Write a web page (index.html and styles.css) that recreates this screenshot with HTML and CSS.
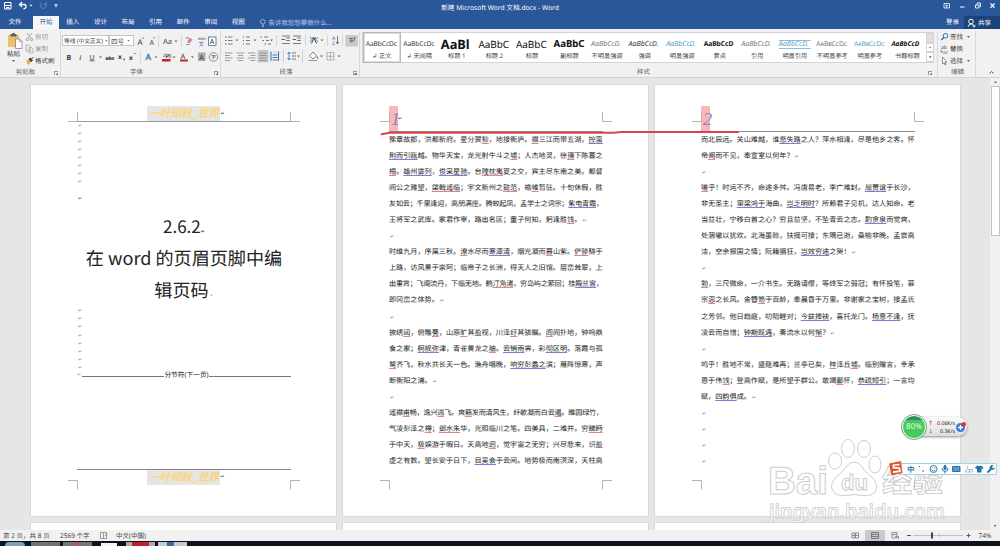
FILE: index.html
```html
<!DOCTYPE html>
<html lang="zh-CN">
<head>
    <meta charset="UTF-8">
    <meta name="viewport" content="width=device-width, initial-scale=1.0">
    <title>新建 Microsoft Word 文档.docx - Word</title>
    <link rel="stylesheet" href="styles.css">
</head>
<body>
    <div class="titlebar">
        <svg class="quick" width="64" height="16" viewBox="0 0 64 16" fill="none" stroke="#fff">
            <path d="M4.5 2.5h6.5v6.500h-6.500zM4.500 5.500h6.500M6.500 9v-1.500h2.500v1.500"/>
            <path d="M20 4.500h4q2.500 .3 2 2.500q-.5 1.500-2.500 2M22 2l-2.500 2.500l2.500 2.500" stroke-width="1.300"/>
            <path d="M29.500 4.700h3l-1.500 1.800z" fill="#fff" stroke="none"/>
            <path d="M45.500 3.500a3 3 0 1 1-3.500-.8M46 2v2.500h-2.500" stroke="#6488bd"/>
            <path d="M54.500 4h3v.7h-3zM54.500 5.500h3l-1.500 1.700z" fill="#fff" stroke="none"/>
        </svg>
        <p>新建 Microsoft Word 文档.docx - Word</p>
        <svg class="quick" width="64" height="16" viewBox="0 0 64 16" fill="none" stroke="#fff">
            <path d="M8 3.500h5.500v4.500h-5.500zM10.700 8v-3M9.500 6l1.200-1.200l1.200 1.200" stroke-width=".8"/>
            <path d="M24 7h4.500"/>
            <path d="M39.500 5h3.500v3h-3.500zM41 4.500v-1.500h3.500v3.500h-1.200" stroke-width=".9"/>
            <path d="M54.500 3.500l4 4.300M58.500 3.500l-4 4.300" stroke-width="1.200"/>
        </svg>
    </div>
    <div class="tabs">
        <span class="tab file">文件</span>
        <span class="tab active">开始</span>
        <span class="tab">插入</span>
        <span class="tab">设计</span>
        <span class="tab">布局</span>
        <span class="tab">引用</span>
        <span class="tab">邮件</span>
        <span class="tab">审阅</span>
        <span class="tab">视图</span>
        <span class="tell">
            <svg width="8" height="10" viewBox="0 0 8 10" fill="none" stroke="#b8cbe6" stroke-width=".8"><path d="M2.700 6q-1.500-1-1.200-2.800q.5-1.700 2.300-1.700t2.300 1.700q.2 1.800-1.200 2.800zM2.800 7.300h2M3 8.500h1.600"/></svg>
            告诉我您想要做什么...
        </span>
        <span class="login">登录</span>
        <span class="share">
            <svg width="9" height="10" viewBox="0 0 9 10" fill="none" stroke="#fff"><circle cx="4" cy="3.500" r="2.300"/><path d="M1 9q.5-3 3-3q1 0 2 1M5.500 8h3M7 6.500v3" stroke-width=".9"/></svg>
            共享
        </span>
    </div>

    <div class="ribbon">
        <div class="group clip">
            <div class="tools">
                <div class="paste">
                    <svg width="16" height="18" viewBox="0 0 16 18"><path d="M1 3h11v12h-11z" fill="#eec06c"/><path d="M3.500 2h1.500q1.500-2.500 3 0h1.500v2.500h-6z" fill="#5f5f5f"/><path d="M8.500 7h4l2.500 2.500v7h-6.500z" fill="#fff" stroke="#777" stroke-width=".7"/><path d="M12.500 7v2.500h2.500" fill="none" stroke="#777" stroke-width=".6"/></svg>
                    <span>粘贴</span>
                    <i class="arrow"></i>
                </div>
                <div class="list">
                    <div class="off"><svg width="10" height="10" viewBox="0 0 10 10" fill="none" stroke="#999" stroke-width=".9"><path d="M2 1l4 5.500M7 1l-4 5.500"/><circle cx="2.300" cy="7.500" r="1.200"/><circle cx="6.600" cy="7.500" r="1.200"/></svg>剪切</div>
                    <div class="off"><svg width="10" height="10" viewBox="0 0 10 10" fill="#f1f1f1" stroke="#aaa" stroke-width=".8"><path d="M1 1h3l1.500 1.500v4.500h-4.500zM4 3.500h2.500l1.500 1.500v4h-4z"/></svg>复制</div>
                    <div><svg width="10" height="10" viewBox="0 0 10 10"><path d="M1 5l3-2 2 2.500-2 3.500q-1 0-3-4z" fill="#eba94b"/><path d="M4 3l1.500-1 2 2.500-1.200 1.200zM6.500 3l2-2" fill="#444" stroke="#444"/></svg>格式刷</div>
                </div>
            </div>
            <div class="label">剪贴板<i class="launch"></i></div>
        </div>

        <div class="group font">
            <div class="row">
                <span class="combo name">等线 (中文正文)<i class="arrow"></i></span>
                <span class="combo size">四号<i class="arrow"></i></span>
                <svg width="83" height="12" viewBox="135 0 83 12">
                    <g fill="#444" class="glyph"><text x="137.500" y="9.500" font-size="8">A</text><text x="149.500" y="9.500" font-size="7">A</text><text x="163" y="9" font-size="7.500">Aa</text><text x="198" y="4.500" font-size="4">wén</text></g>
                    <path d="M142 3.500l1-1.500 1 1.500zM153 2.500h2l-1 1.300z" fill="#2a6fb5"/>
                    <path d="M158.500 0v12M181.500 0v12" stroke="#d5d5d5"/>
                    <path d="M174.500 5.500h3l-1.500 1.700z" fill="#666"/>
                    <path d="M187 7l3-4 2.500 1.500-3 4z" fill="#df7891"/><path d="M186 4l1.500-2 1.500 2M186.500 9.500h3" stroke="#555" stroke-width=".7" fill="none"/>
                    <text x="198.500" y="10.500" font-size="5.500" fill="#2a6fb5">文</text>
                    <rect x="208.500" y="2" width="7.500" height="8.500" fill="#fff" stroke="#426b99" stroke-width=".8"/><text x="209.700" y="9" font-size="7" fill="#333">A</text>
                </svg>
            </div>
            <svg class="second" width="157" height="12" viewBox="61 0 157 12">
                <g fill="#333" font-size="7"><text x="65.500" y="8.500" font-weight="bold">B</text><text x="78" y="8.500" font-style="italic" font-family="Liberation Serif">I</text><text x="88.500" y="8.500" text-decoration="underline">U</text><text x="104.500" y="8.500" font-size="5" font-weight="bold" text-decoration="line-through">abc</text><text x="117" y="8" font-weight="bold" font-size="6.500">x</text><text x="128" y="8.500" font-weight="bold" font-size="6.500">x</text><text x="162" y="6" font-size="5">aby</text><text x="179.500" y="8" font-size="7.500">A</text></g>
                <path d="M122 8h1.500v1.500M133 2.500h1.500" stroke="#2a6fb5" fill="none"/>
                <path d="M98 5.500h3l-1.500 1.700zM153.500 5.500h3l-1.500 1.700zM171.500 5.500h3l-1.500 1.700zM190 5.500h3l-1.500 1.700z" fill="#666"/>
                <path d="M139.500 0v12" stroke="#d5d5d5"/>
                <text x="144.500" y="9" font-size="8.500" fill="#fff" stroke="#568dc7" stroke-width=".7">A</text>
                <path d="M165 7l3.500-4" stroke="#444"/><path d="M161 8h8.500v2.500h-8.500zM179 8.500h8v2h-8z" fill="#d51e2d"/>
                <path d="M197 1.500h7.500v8.500h-7.500z" fill="#aaa"/><text x="198.300" y="8.500" font-size="7" fill="#333">A</text>
                <circle cx="212.500" cy="6" r="4.300" fill="none" stroke="#666" stroke-width=".7"/><text x="210" y="8" font-size="5" fill="#444">字</text>
            </svg>
            <div class="label">字体<i class="launch"></i></div>
        </div>

        <div class="group para">
            <svg width="136" height="14" viewBox="222 0 136 14">
                <path d="M345.500 1h12.500v11.500h-12.500z" fill="#c9c9c9"/>
                <path d="M228 3h4.500M228 6.500h4.500M228 10h4.500M246 3h4M246 6.500h4M246 10h4M264 3h4M266 6.500h3M268 10h3M286 4h4M286 6.500h4M282 9.500h8M282 2h8M297 4h4M297 6.500h4M293 9.500h8M293 2h8" stroke="#6d6d6d" stroke-width=".9"/>
                <path d="M225 3h1.500M225 6.500h1.500M225 10h1.500M243 3h1M243 6.500h1M243 10h1M260.500 3h1.500M262.500 6.500h1.500M264.500 10h1.500M281.500 5.500h3.500M292.500 5.500h3.500" stroke="#2a6fb5" stroke-width="1.200"/>
                <path d="M235.500 5.500h3l-1.500 1.700zM253.500 5.500h3l-1.500 1.700zM270 5.500h3l-1.500 1.700zM320.500 5.500h3l-1.500 1.700z" fill="#666"/>
                <path d="M276.500 1v11M305.500 1v11M327.500 1v11M342.500 1v11" stroke="#d5d5d5"/>
                <path d="M310 3l2 2.500-2 2.500M318 3l-2 2.500 2 2.500" stroke="#2a6fb5" fill="none" stroke-width=".8"/><path d="M311.500 9.500l2.500-5.500 2.500 5.500M312 4h4" stroke="#444" fill="none"/>
                <text x="332" y="6" font-size="5" fill="#2a6fb5">A</text><text x="332" y="11" font-size="5" fill="#77539a">Z</text><path d="M337.500 2v7.500M336 8l1.500 2 1.500-2" stroke="#555" fill="none" stroke-width=".8"/>
                <path d="M355 3l-1.500 4h-3.500M351.500 5.500l-1.500 1.500 1.500 1.500M349 4.500h4" stroke="#555" fill="none" stroke-width=".9"/>
            </svg>
            <svg class="second" width="136" height="13" viewBox="222 0 136 13">
                <path d="M257.500 0h11v12.500h-11z" fill="#c7c7c7"/>
                <path d="M225 3h7.500M225 5.500h5M225 8h7.500M225 10.500h5M236.500 3h7.500M238 5.500h5M236.500 8h7.500M238 10.500h5M248 3h7.500M250.500 5.500h5M248 8h7.500M250.500 10.500h5M259.500 3h7M259.500 5.500h7M259.500 8h7M259.500 10.500h7" stroke="#888" stroke-width=".8"/>
                <path d="M271 1.500v9.500M278.500 1.500v9.500" stroke="#2a6fb5"/><path d="M272.500 5h5M272.500 7.500h5M272.500 10h5" stroke="#4a79ad"/>
                <path d="M273 2h4M283.500 0v12M302.500 0v12" stroke="#ccc"/>
                <path d="M289 2v8M287.500 4l1.500-2 1.500 2M287.500 8l1.500 2 1.500-2" stroke="#2a6fb5" fill="none" stroke-width=".8"/><path d="M292 3h4M292 6h4M292 9h4" stroke="#777"/>
                <path d="M309.500 6l3.500-4 3.500 4-3.500 3zM317 6l1 3" fill="#fff" stroke="#666" stroke-width=".8"/><path d="M308 10.500h9" stroke="#999"/>
                <path d="M327 2.500h7v7.500h-7zM330.500 2.500v7.500M327 6.300h7" fill="none" stroke="#999" stroke-width=".7"/>
                <path d="M297 5.500h3l-1.500 1.700zM320 5.500h3l-1.500 1.700zM337.500 5.500h3l-1.500 1.700z" fill="#666"/>
            </svg>
            <div class="label">段落<i class="launch"></i></div>
        </div>

        <div class="group styles">
            <div class="gallery">
                <div class="style on"><b>AaBbCcDc</b><span>↲ 正文</span></div>
                <div class="style"><b>AaBbCcDc</b><span>↲ 无间隔</span></div>
                <div class="style h1"><b>AaBl</b><span>标题 1</span></div>
                <div class="style h2"><b>AaBbC</b><span>标题 2</span></div>
                <div class="style h2"><b>AaBbC</b><span>标题</span></div>
                <div class="style h2 bold"><b>AaBbC</b><span>副标题</span></div>
                <div class="style it gray"><b>AaBbCcD.</b><span>不明显强调</span></div>
                <div class="style it"><b>AaBbCcD.</b><span>强调</span></div>
                <div class="style it blue"><b>AaBbCcD.</b><span>明显强调</span></div>
                <div class="style bold"><b>AaBbCcD</b><span>要点</span></div>
                <div class="style it gray"><b>AaBbCcD.</b><span>引用</span></div>
                <div class="style it blue lined"><b>AaBbCcD.</b><span>明显引用</span></div>
                <div class="style gray caps"><b>AaBbCcDc</b><span>不明显参考</span></div>
                <div class="style blue caps"><b>AaBbCcDc</b><span>明显参考</span></div>
                <div class="style it bold"><b>AaBbCcD</b><span>书籍标题</span></div>
                <div class="more"><i class="dim"></i><i><em class="arrow"></em></i><i><em class="arrow"></em></i></div>
            </div>
            <div class="label">样式<i class="launch"></i></div>
        </div>

        <div class="group edit">
            <div class="list">
                <div><svg width="10" height="10" viewBox="0 0 10 10" fill="none" stroke="#2a6fb5"><circle cx="5.500" cy="3.800" r="2.300"/><path d="M3.800 5.500l-2.500 2.500" stroke-width="1.400"/></svg>查找<i class="arrow"></i></div>
                <div><svg width="10" height="10" viewBox="0 0 10 10"><text x="1" y="5" font-size="5" fill="#444">ab</text><text x="3" y="9.500" font-size="5" fill="#77539a">ac</text><path d="M1 6v2h2" fill="none" stroke="#2a6fb5" stroke-width=".8"/></svg>替换</div>
                <div><svg width="10" height="10" viewBox="0 0 10 10"><path d="M2.500 1v7l1.500-1.500 1 2.500 1-.5-1-2.500h2z" fill="#fff" stroke="#666" stroke-width=".7"/></svg>选择<i class="arrow"></i></div>
            </div>
            <div class="label">编辑</div>
        </div>
        <svg class="fold" width="8" height="6" viewBox="0 0 8 6" fill="none" stroke="#555"><path d="M1.500 4.500l2-2 2 2"/></svg>
    </div>

    <div class="desk">
        <div class="pages">
            <div class="page cover">
                <svg class="marks" width="305" height="431" viewBox="0 0 305 431"><path d="M37 36.500h9M46.500 27v10M269 36.500h-9M259.500 27v10M37 395.500h9.500v9M269 395.500h-9.500v9"/></svg>
                <div class="head"><span class="art">一叶知秋_世界</span>↵</div>
                <div class="returns">↵<br>↵<br>↵<br>↵<br>↵<br>↵<br>↵<br>↵</div>
                <div class="returns dark">↵</div>
                <h1><span>2.6.2</span><small>↵</small><br>在 word 的页眉页脚中编<br>辑页码<small>·</small></h1>
                <div class="returns">↵<br>↵<br>↵<br>↵<br>↵<br>↵<br>↵<br>↵</div>
                <div class="break"><small>↵</small><i></i>分节符(下一页)<i></i></div>
                <div class="foot"><span class="art">一叶知秋_世界</span>↵</div>
            </div>

            <div class="page">
                <svg class="marks" width="305" height="431" viewBox="0 0 305 431"><path d="M37 36.500h9M46.500 27v10M269 36.500h-9.500v-9.500M37 395.500h9.500v9M269 395.500h-9.500v9"/></svg>
                <div class="num"><span>1</span>↵</div>
                <div class="text">
                    <p>豫章故郡，洪都新府。星分翼<u>轸</u>，地接衡庐。<u>襟</u>三江而带五湖，<u class="g">控蛮</u></p>
                    <p><u class="g">荆而引瓯</u>越。物华天宝，龙光射牛斗之<u>墟</u>；人杰地灵，徐<u>孺</u>下陈蕃之</p>
                    <p><u>榻</u>。<u class="g">雄州雾列</u>，<u class="g">俊采星驰</u>。台<u>隍枕夷</u>夏之交，宾主尽东南之美。都督</p>
                    <p>阎公之雅望，<u>棨戟遥临</u>；宇文新州之<u>懿范</u>，襜<u>帷</u>暂驻。十旬休假，胜</p>
                    <p class="tight">友如云；千里逢迎，高朋满座。腾蛟起凤，孟学士之词宗；<u class="g">紫电青霜</u>，</p>
                    <p>王将军之武库。家君作宰，路出名区；童子何知，躬逢胜<u>饯</u>。<s>↵</s></p>
                    <p><s>↵</s></p>
                    <p>时维九月，序属三秋。<u>潦</u>水尽而<u class="g">寒潭清</u>，烟光凝而<u>暮</u>山紫。<u>俨骖</u>騑于</p>
                    <p>上路，访风景于崇阿；临帝子之长洲，得天人之旧馆。层峦耸翠，上</p>
                    <p class="tight">出重霄；飞阁流丹，下临无地。鹤<u>汀凫渚</u>，穷岛屿之萦回；桂<u class="g">殿兰宫</u>，</p>
                    <p>即冈峦之体势。<s>↵</s></p>
                    <p><s>↵</s></p>
                    <p>披绣<u>闼</u>，俯雕<u>甍</u>，山原<u>旷</u>其盈视，川泽<u>纡</u>其骇瞩。<u>闾</u>阎扑地，钟鸣鼎</p>
                    <p>食之家；<u class="g">舸舰弥</u>津，青雀黄龙之<u>舳</u>。<u class="g">云销雨</u>霁，彩<u class="g">彻区明</u>。落霞与孤</p>
                    <p><u>鹜</u>齐飞，秋水共长天一色。渔舟唱晚，<u class="g">响穷彭蠡之</u>滨；雁阵惊寒，声</p>
                    <p>断衡阳之浦。<s>↵</s></p>
                    <p><s>↵</s></p>
                    <p class="tight">遥襟<u>甫</u>畅，逸兴<u>遄</u>飞。爽<u>籁</u>发而清风生，纤歌凝而白云<u>遏</u>。睢园绿竹，</p>
                    <p>气凌彭泽之<u>樽</u>；<u>邺水朱</u>华，光照临川之笔。四美具，二难并。穷<u>睇眄</u></p>
                    <p>于中天，<u>极</u>娱游于暇日。天高地<u>迥</u>，觉宇宙之无穷；兴尽悲来，识盈</p>
                    <p>虚之有数。望长安于日下，<u class="g">目吴会</u>于云间。地势极而南溟深，天柱高</p>
                </div>
            </div>

            <div class="page">
                <svg class="marks" width="305" height="431" viewBox="0 0 305 431"><path d="M37 36.500h9M46.500 27v10M269 36.500h-9.500v-9.500M37 395.500h9.500v9M269 395.500h-9.500v9"/></svg>
                <div class="num"><span>2</span></div>
                <div class="text">
                    <p>而北辰远。关山难越，谁<u class="g">悲失路</u>之人？萍水相逢，尽是他乡之客。怀</p>
                    <p>帝<u>阍</u>而不见，奉宣室以何年？<s>↵</s></p>
                    <p><s>↵</s></p>
                    <p><u>嗟</u>乎！时运不齐，命途多舛。冯唐易老，李广难封。<u class="g">屈贾谊</u>于长沙，</p>
                    <p>非无圣主；<u class="g">窜梁鸿于</u>海曲，<u class="g">岂乏明时</u>？所赖君子见机，达人知命。老</p>
                    <p>当益壮，宁移白首之心？穷且益坚，不坠青云之志。<u class="g">酌贪泉</u>而觉爽，</p>
                    <p>处涸辙以犹欢。北海虽赊，扶摇可接；东隅已逝，桑榆非晚。孟尝高</p>
                    <p>洁，空余报国之情；阮籍猖狂，<u class="g">岂效穷途</u>之哭！<s>↵</s></p>
                    <p><s>↵</s></p>
                    <p><u>勃</u>，三尺微命，一介书生。无路请缨，等终军之弱冠；有怀投笔，慕</p>
                    <p>宗<u>悫</u>之长风。舍簪<u>笏</u>于百龄，奉晨昏于万里。非谢家之宝树，接孟氏</p>
                    <p>之芳邻。他日趋庭，叨陪鲤对；<u class="g">今兹捧袂</u>，喜托龙门。<u class="g">杨意不逢</u>，抚</p>
                    <p>凌云而自惜；<u class="g">钟期既遇</u>，奏流水以何<u>惭</u>？<s>↵</s></p>
                    <p><s>↵</s></p>
                    <p>呜乎！胜地不常，盛筵难再；兰亭已矣，<u>梓</u>泽丘<u>墟</u>。临别赠言，幸承</p>
                    <p>恩于伟<u>饯</u>；登高作赋，是所望于群公。敢竭<u>鄙</u>怀，<u class="g">恭疏短引</u>；一言均</p>
                    <p>赋，<u class="g">四韵俱</u>成。<s>↵</s></p>
                    <p><s>↵</s></p>
                    <p><s>↵</s></p>
                    <p><s>↵</s></p>
                    <p><s>↵</s></p>
                </div>
            </div>
            <div class="page"></div>
            <div class="page"></div>
            <div class="page"></div>
        </div>
        <div class="scroll">
            <i class="arrow up"></i>
            <i class="thumb"></i>
            <i class="arrow"></i>
        </div>
        <!-- pen stroke under the two headers -->
        <svg class="stroke" width="360" height="8" viewBox="380 129 360 8" fill="none" stroke="#d2474b" stroke-width="2" stroke-linecap="round"><path d="M381.500 134.300l8-1.500h224l8-.8h116.500"/></svg>
    </div>

    <div class="status">
        <span class="s1">第 2 页，共 8 页</span>
        <span class="s2">2569 个字</span>
        <svg width="16" height="9" viewBox="0 0 16 9" fill="none" stroke="#777" stroke-width=".7"><path d="M.5 1.500h3v6h-3zM3.500 1.500h3v6h-3M5 5l2.500-3"/></svg>
        <span>中文(中国)</span>
        <svg class="view" width="150" height="11" viewBox="850 0 150 11">
            <path d="M865 0h20v11h-20z" fill="#cacaca"/>
            <path d="M852 3h3v5h-3zM855.500 3h3v5h-3zM852 5.500h6M892 2.500h5v5.500h-5zM892 4.500h5M895 6.500h3.500v2.500" fill="none" stroke="#777" stroke-width=".8"/>
            <path d="M871.500 2.500h7v6h-7zM872 4.500h6M872 6.500h6" fill="none" stroke="#666" stroke-width=".8"/>
            <path d="M907 5.500h4M966.500 5.500h4M968.500 3.500v4" stroke="#555"/>
            <path d="M913 5.500h50M939 4v3" stroke="#aaa" stroke-width=".7"/>
            <path d="M931 2.500h2v6h-2z" fill="#444"/>
            <text x="978.500" y="8" font-size="6.500" fill="#444">74%</text>
        </svg>
    </div>
    <div class="taskbar">
        <i class="orb"></i><i></i><i class="r"></i><i class="w"></i><i class="rr"></i><i class="bl"></i>
    </div>

    <svg class="water" width="190" height="92" viewBox="762 434 190 92">
        <g fill="#fff" fill-opacity=".75" stroke="#cdcdcd" stroke-width="1">
            <text class="bai" x="768" y="494" font-size="39" textLength="60" lengthAdjust="spacingAndGlyphs">Bai</text>
            <ellipse cx="835" cy="461" rx="6.500" ry="8"/>
            <ellipse cx="848" cy="448.500" rx="6.500" ry="9"/>
            <ellipse cx="864" cy="449" rx="6.500" ry="8.500"/>
            <ellipse cx="875" cy="464.500" rx="6" ry="8.500"/>
            <path d="M854 462q5 0 8 5q2 4 6.500 7.500q8 5.500 8 12q0 9-10 9q-6 0-12.500-1q-5 1-11 1q-11 0-11.500-9q0-6 7-11.500q5-3.500 7.500-8q3-5 8-5z"/>
            <text class="bai" x="841" y="490" font-size="22" textLength="27">du</text>
            <text class="cn" x="882" y="492" font-size="30" textLength="61">经验</text>
            <text class="url" x="769" y="518" font-size="19.500" textLength="176" lengthAdjust="spacingAndGlyphs">jingyan.baidu.com</text>
        </g>
    </svg>

    <div class="speed">
        <div class="ball">80%</div>
        <div class="rates"><span><b class="hot">↑</b>0.06K/s</span><span><b>↓</b>0.3K/s</span></div>
        <svg width="12" height="12" viewBox="0 0 12 12"><circle cx="5.500" cy="6.500" r="4.500" fill="#3c7bd0"/><path d="M3 6.500h5M5.500 4v5" stroke="#fff" stroke-width="1.300"/><circle cx="8.800" cy="3.200" r="2.200" fill="#dd3038"/></svg>
    </div>

    <svg class="ime" width="110" height="18" viewBox="888 460 110 18">
        <path d="M899.500 463.500h97v11h-97z" fill="#fff" fill-opacity=".85" stroke="#a9d0e7"/>
        <path d="M889 463.500l12-2.500 1.500 12-11 2.500z" fill="#df5530"/><path d="M899.500 464.500l-6 .7v2.500l6 .5.500 3-7 1" fill="none" stroke="#fff" stroke-width="1.700"/>
        <text x="907" y="472" font-size="7.500" font-weight="bold" fill="#2276ae">中</text>
        <path d="M919 466l1 1M923 470v2" stroke="#2276ae"/>
        <circle cx="933.500" cy="469" r="3.500" fill="none" stroke="#2276ae" stroke-width=".9"/><path d="M931.500 470q2 2 4 0M932 467.500v1M935 467.500v1" fill="none" stroke="#2276ae" stroke-width=".8"/>
        <rect x="943.500" y="465" width="3" height="5" rx="1.500" fill="#2276ae"/><path d="M942 468q0 3.500 3 3.500t3-3.500M945 471.500v2" fill="none" stroke="#2276ae"/>
        <rect x="952" y="466" width="8.500" height="6" rx="1" fill="#2276ae"/><path d="M953.500 468h5.500M953.500 470h5.500" stroke="#fff" stroke-width=".8" stroke-dasharray="1 .5"/>
        <path d="M967.500 466v2M965.500 472q0-3 2-3t2 3zM969.500 469.500h3v2.500h-3z" fill="none" stroke="#9bb9cc" stroke-width=".9"/>
        <path d="M977.500 465.500l-2.500 2 1 1.500 1-.5v4h4.500v-4l1 .5 1-1.500-2.500-2q-1.800 1.200-3.500 0z" fill="#2276ae"/>
        <path d="M987.500 472.500l4-4" stroke="#2276ae" stroke-width="2"/><path d="M993.500 465.500l-1.500 1.500.5 1 1 .3 1-1q.5 3-3 2.500t-1-4q1-1.500 3-.3z" fill="#2276ae"/>
    </svg>
</body>
</html>
```
FILE: styles.css
```css
*{
    margin: 0;
    padding: 0;
    box-sizing: border-box;
}
body{
    width: 1000px;
    height: 546px;
    overflow: hidden;
    display: flex;
    flex-direction: column;
    position: relative;
    background: #e6e6e6;
    font-family: "Noto Sans", "Noto Sans CJK SC", sans-serif;
    font-size: 6.5px;
    color: #444;
    text-rendering: geometricPrecision;
}
svg{
    display: block;
    flex: none;
}
i{
    font-style: normal;
}
.arrow{
    display: block;
    width: 3px;
    height: 2px;
    background: #666;
    clip-path: polygon(0 0, 100% 0, 50% 100%);
}
.arrow.up{
    transform: rotate(180deg);
}

/* title and tabs */
.titlebar{
    height: 16px;
    flex: none;
    display: flex;
    justify-content: space-between;
    background: #2a579a;
    color: #fff;
}
.titlebar p{
    font-size: 6.7px;
    line-height: 16px;
}
.tabs{
    height: 13px;
    flex: none;
    display: flex;
    background: #2a579a;
    color: #fff;
    line-height: 12px;
}
.tab{
    width: 27.6px;
    text-align: center;
}
.tab.file{
    width: 30px;
    margin-right: 3px;
}
.tab.active{
    width: 26px;
    background: #f6f6f6;
    color: #2a579a;
}
.tell{
    display: flex;
    align-items: center;
    margin-left: 7px;
    gap: 1px;
    color: #b8cbe6;
}
.login{
    margin-left: auto;
    margin-right: 5px;
}
.share{
    width: 36px;
    display: flex;
    align-items: center;
    padding-left: 3px;
    gap: 2px;
    background: #1c4379;
}

/* ribbon */
.ribbon{
    height: 49px;
    flex: none;
    display: flex;
    background: #f1f1f1;
    border-bottom: 1px solid #d3d3d3;
}
.group{
    display: flex;
    flex-direction: column;
    border-right: 1px solid #d8d8d8;
    margin-top: 2px;
    height: 46px;
}
.clip{ width: 61px; }
.font{ width: 160px; padding-left: 1px; }
.para{ width: 139px; padding-left: 1px; }
.styles{ width: 578px; padding: 1px 3px 0 2px; }
.edit{ width: 38px; padding-left: 2px; }
.label{
    margin-top: auto;
    height: 10px;
    line-height: 10px;
    text-align: center;
    position: relative;
    padding-right: 9px;
    color: #666;
}
.edit .label{
    padding-right: 0;
}
.launch{
    position: absolute;
    right: 2px;
    top: 4px;
    width: 4px;
    height: 4px;
    border-left: 1px solid #999;
    border-top: 1px solid #999;
    background: linear-gradient(135deg, transparent 50%, #777 50%);
}
.tools{
    display: flex;
    padding-left: 6px;
}
.paste{
    width: 19px;
    display: flex;
    flex-direction: column;
    align-items: center;
    padding-right: 4px;
}
.paste svg{
    margin: 1px 0 0 2px;
}
.paste span{
    line-height: 8px;
    white-space: nowrap;
}
.paste .arrow{
    margin-top: 2px;
}
.list div{
    display: flex;
    align-items: center;
    height: 12px;
    line-height: 12px;
    white-space: nowrap;
}
.list .off{
    color: #999;
}
.list .arrow{
    margin-left: 4px;
}
.row{
    display: flex;
    padding-top: 4px;
}
.combo{
    display: flex;
    align-items: center;
    justify-content: space-between;
    height: 11px;
    overflow: hidden;
    white-space: nowrap;
    border: 1px solid #c6c6c6;
    background: #fff;
    padding: 0 1px;
    letter-spacing: -.1px;
}
.combo .arrow{
    flex: none;
    margin: 0 2px;
}
.combo.name{
    width: 47px;
    font-size: 5.8px;
}
.combo.size{
    width: 25px;
    margin-right: 1px;
}
.second{
    margin-top: 4px;
}
.para > svg:first-child{
    margin-top: 3px;
}
.para .second{
    margin-top: 2px;
}

.gallery{
    display: flex;
    height: 31px;
    background: #fff;
    border: 1px solid #d4d4d4;
}
.style{
    width: 37.55px;
    flex: none;
    display: flex;
    flex-direction: column;
    align-items: center;
    white-space: nowrap;
}
.style.on{
    border: 1px solid #b8b8b8;
    outline: 1px solid #dcdcdc;
    outline-offset: -2px;
    margin: -1px 0;
}
.style b{
    width: 32px;
    height: 14px;
    margin-top: 4px;
    line-height: 14px;
    font-weight: normal;
    font-size: 6.6px;
    letter-spacing: -.05px;
    color: #333;
}
.style span{
    font-size: 6.2px;
    line-height: 10px;
}
.h1 b{
    font-size: 12.8px;
    font-weight: bold;
    color: #111;
}
.h2 b{
    font-size: 10px;
    color: #111;
}
.bold b{
    font-weight: bold;
    color: #111;
}
.h2.bold b{
    font-size: 9.7px;
}
.bold:not(.h2) b{
    font-size: 6.7px;
}
.it b{
    font-style: italic;
    font-size: 7.1px;
}
.gray b{ color: #777; }
.blue b{ color: #5b9fc9; }
.caps b{
    font-variant: small-caps;
}
.lined b{
    height: 9px;
    line-height: 7px;
    margin: 7px 0 2px;
    border-top: 1px solid #8dbcd8;
    border-bottom: 1px solid #8dbcd8;
}
.more{
    width: 8px;
    flex: none;
    margin-left: auto;
    display: flex;
    flex-direction: column;
}
.more i{
    flex: 1;
    display: flex;
    align-items: center;
    justify-content: center;
    border: 1px solid #d4d4d4;
}
.more .dim{
    background: #dedede;
}
.fold{
    margin: 40px 0 0 12px;
}

/* document */
.desk{
    flex: 1;
    min-height: 0;
    display: flex;
    position: relative;
    overflow: hidden;
}
.pages{
    flex: 1;
    display: grid;
    grid-template-columns: repeat(3, 305px);
    grid-template-rows: 431px 431px;
    gap: 7px;
    padding: 7px 0 0 31px;
}
.page{
    position: relative;
    background: #fff;
    outline: 1px solid #d9d9d9;
    padding: 21px 45px 0 46px;
}
.marks{
    position: absolute;
    left: 0;
    top: 0;
    fill: none;
    stroke: #b4b4b4;
}
.num{
    height: 26px;
    border-bottom: 1px solid #8c8c8c;
    display: flex;
    align-items: center;
    font-size: 5px;
}
.num span{
    width: 9px;
    height: 25px;
    padding-left: 2px;
    background: #fbb6b9;
    color: #8187c4;
    font: italic 18px/26px "Liberation Serif", serif;
}
.text{
    font: 7.13px/16.05px "Noto Sans CJK SC", sans-serif;
    color: #1c1c1c;
    white-space: nowrap;
}
.text p{
    height: 16.05px;
}
.tight{
    letter-spacing: -.23px;
}
u{
    text-decoration: underline 1px #e38484;
    text-underline-offset: 1px;
    text-decoration-skip-ink: none;
}
.g{
    text-decoration-color: #7b7fd8;
}
s{
    text-decoration: none;
    color: #888;
    font: 5px "DejaVu Sans", sans-serif;
    margin-left: 1px;
}
.head, .foot{
    height: 16px;
    display: flex;
    justify-content: center;
    align-items: center;
    font-size: 5px;
}
.head{
    border-bottom: 1px solid #999;
    padding-left: 4px;
}
.foot{
    margin-top: 90px;
    border-top: 1px solid #888;
    padding-left: 4px;
}
.art{
    width: 73px;
    height: 15px;
    background: #e5e5e5;
    color: #fbd680;
    font: italic bold 11px/14px "Noto Sans CJK SC", sans-serif;
    white-space: nowrap;
    text-align: center;
    letter-spacing: -.4px;
}
.returns{
    font: 5px/8.05px "DejaVu Sans", sans-serif;
    color: #999;
    padding-left: 1px;
}
.returns.dark{
    line-height: 27px;
    height: 24px;
    color: #555;
}
h1{
    height: 96px;
    margin: 0 -10px;
    font: 18.1px/32px "Noto Sans CJK SC", sans-serif;
    color: #222;
    text-align: center;
    white-space: nowrap;
}
h1 span{
    font-size: 17px;
    line-height: 0;
}
h1 small{
    font-size: 5px;
    line-height: 0;
}
h1 + .returns{
    margin-top: 1px;
}
.break{
    height: 8px;
    margin-top: -1px;
    display: flex;
    align-items: center;
    font-size: 6.7px;
    line-height: 8px;
    color: #222;
    white-space: nowrap;
}
.break small{
    width: 5px;
    font-size: 5px;
    color: #999;
}
.break i{
    flex: 1;
    margin-top: 3px;
    border-top: 1px solid #777;
}
.stroke{
    position: absolute;
    left: 380px;
    top: 51px;
}
.scroll{
    width: 10px;
    display: flex;
    flex-direction: column;
    align-items: center;
    background: #f0f0f0;
    padding: 3px 0;
}
.thumb{
    width: 9px;
    height: 150px;
    margin: 3px 0 auto;
    background: #fff;
    border: 1px solid #c4c4c4;
}

/* bottom bars */
.status{
    height: 11px;
    flex: none;
    display: flex;
    align-items: center;
    background: #f1f1f1;
    padding-left: 3px;
    line-height: 11px;
}
.s1{ width: 57px; }
.s2{ width: 40px; }
.view{
    margin-left: auto;
}
.taskbar{
    height: 5px;
    flex: none;
    display: flex;
    gap: 3px;
    padding: 1px 0 0 5px;
    background: #0c1420;
}
.taskbar i{
    width: 29px;
    background: #77726c;
}
.taskbar .orb{
    width: 20px;
    margin-right: 3px;
    border-radius: 10px 10px 0 0;
    background: #7fa0b4;
}
.taskbar .r{ background: linear-gradient(90deg, #777 35%, #b4564d 50%, #777 65%); }
.taskbar .w{ width: 16px; margin: 1px 6px 0; background: #f5f5f5; }
.taskbar .rr{ background: linear-gradient(90deg, #aaa 20%, #c11e2c 20% 80%, #aaa 80%); }
.taskbar .bl{ background: linear-gradient(90deg, #c5c9ce 30%, #3868a6 30% 55%, #c5c9ce 55%); }

/* floating things over the document */
.water{
    position: absolute;
    left: 762px;
    top: 434px;
}
.bai{
    font-family: "Liberation Sans", sans-serif;
    font-weight: bold;
}
.cn{
    font-family: "Noto Sans CJK SC", sans-serif;
    font-weight: bold;
}
.url{
    font-family: "Noto Sans", sans-serif;
    font-weight: 600;
    stroke-width: .8px;
}
.speed{
    position: absolute;
    left: 903px;
    top: 417px;
    width: 64px;
    height: 19px;
    display: flex;
    align-items: center;
    border-radius: 10px;
    background: linear-gradient(#fafafa, #dedede);
    box-shadow: 0 1px 3px #888;
}
.ball{
    width: 24px;
    height: 24px;
    flex: none;
    margin: 0 2px 0 -1px;
    border-radius: 50%;
    border: 1px solid #fff;
    outline: 1px solid #69a984;
    background: linear-gradient(#2f8f63 18%, #47c95b 20%);
    color: #e3ffe5;
    font-size: 8px;
    line-height: 22px;
    text-align: center;
}
.rates{
    width: 27px;
    font-size: 5.2px;
    line-height: 8px;
    color: #222;
}
.rates span{
    display: flex;
    justify-content: space-between;
}
.rates b{ color: #2c9b4a; }
.rates .hot{ color: #d8323a; }
.ime{
    position: absolute;
    left: 888px;
    top: 460px;
}
```
